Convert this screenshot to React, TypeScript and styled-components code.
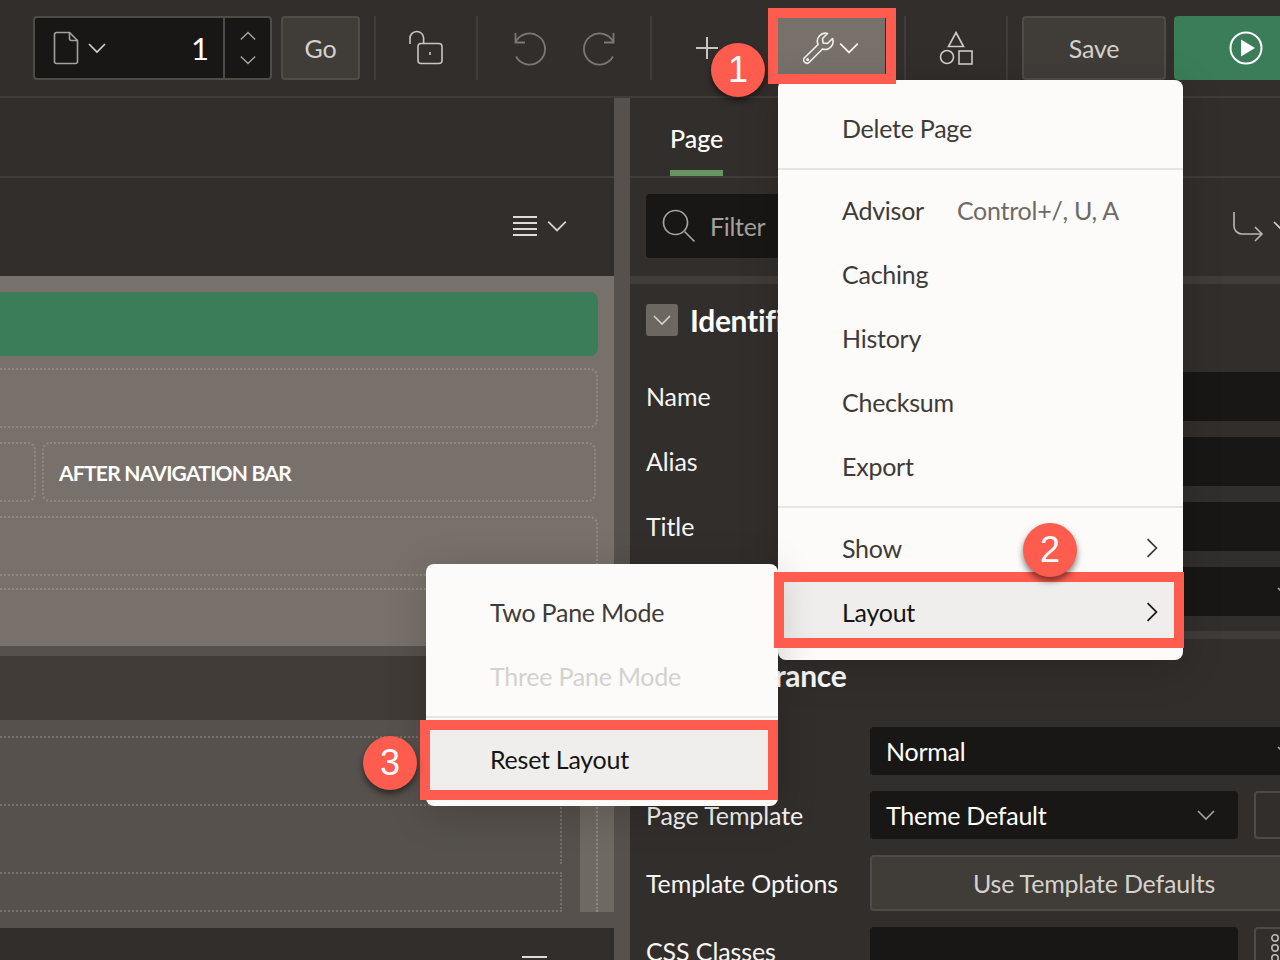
import styled, { createGlobalStyle } from 'styled-components'
import { ReactNode } from 'react'

const GlobalStyle = createGlobalStyle`
  html, body { margin: 0; padding: 0; background: #322e2b; overflow: hidden; }
  * { box-sizing: border-box; }
`

const FONT = `Lato, "Noto Sans", "Liberation Sans", sans-serif`

function Chevron({ dir = 'down', size = 20, color = '#d6d3cf' }: { dir?: 'down' | 'up' | 'right'; size?: number; color?: string }) {
  const d = dir === 'down' ? 'M2 6l8 8 8-8' : dir === 'up' ? 'M2 14l8-8 8 8' : 'M6 2l8 8-8 8'
  return (
    <svg width={size} height={size} viewBox="0 0 20 20" fill="none" stroke={color} strokeWidth={1.6}>
      <path d={d} />
    </svg>
  )
}

function PageIcon() {
  return (
    <svg width="26" height="34" viewBox="0 0 26 34" fill="none" stroke="#a5a19c" strokeWidth={1.6}>
      <path d="M1.5 3.5a2 2 0 0 1 2-2h13l8 8v21a2 2 0 0 1-2 2h-19a2 2 0 0 1-2-2z" />
      <path d="M16.5 1.5v6a2 2 0 0 0 2 2h6" />
    </svg>
  )
}

function LockIcon() {
  return (
    <svg width="34" height="36" viewBox="0 0 34 36" fill="none" stroke="#c8c5c1" strokeWidth={1.6}>
      <path d="M1 14V8.5a6.8 6.8 0 0 1 13.6-.5v5" />
      <rect x="9" y="13.5" width="24" height="20" rx="3" />
      <path d="M21 22v3" />
    </svg>
  )
}

function UndoIcon({ flip }: { flip?: boolean }) {
  return (
    <svg width="34" height="36" viewBox="0 0 34 36" fill="none" stroke="#7d7873" strokeWidth={1.8} style={flip ? { transform: 'scaleX(-1)' } : undefined}>
      <path d="M3.5 3v9.5H13" />
      <path d="M3.5 12.5A15.5 15.5 0 1 1 4 26.5" />
    </svg>
  )
}

function WrenchIcon() {
  return (
    <svg width="33" height="33" viewBox="0 0 33 33" fill="none" stroke="#f2f0ed" strokeWidth={1.6} strokeLinejoin="round">
      <path d="M24.5 1.5l-5 5 .5 4.5 4.5.5 5-5a8 8 0 0 1-10 10.5L6.5 30a3.2 3.2 0 0 1-5-4.2l13.6-13.3A8 8 0 0 1 24.5 1.5z" />
      <circle cx="4.6" cy="27.6" r="0.8" />
    </svg>
  )
}

function ShapesIcon() {
  return (
    <svg width="35" height="34" viewBox="0 0 35 34" fill="none" stroke="#cfccc8" strokeWidth={1.6}>
      <path d="M17 1.5L24.5 15.5h-15z" />
      <circle cx="8" cy="26" r="6.5" />
      <rect x="20" y="20" width="13" height="13" />
    </svg>
  )
}

function PlayIcon() {
  return (
    <svg width="34" height="34" viewBox="0 0 34 34" fill="none">
      <circle cx="17" cy="17" r="15.5" stroke="#fff" strokeWidth={2} />
      <path d="M12 8.5L26 17l-14 8.5z" fill="#fff" />
    </svg>
  )
}

function SearchIcon() {
  return (
    <svg width="34" height="34" viewBox="0 0 34 34" fill="none" stroke="#a5a19c" strokeWidth={1.7}>
      <circle cx="13.5" cy="13.5" r="12" />
      <path d="M22.5 22.5l10 10" />
    </svg>
  )
}

function ReturnIcon() {
  return (
    <svg width="32" height="32" viewBox="0 0 32 32" fill="none" stroke="#bcb8b4" strokeWidth={1.6}>
      <path d="M2 2v14a8 8 0 0 0 8 8h20" />
      <path d="M23 17l7 7-7 7" />
    </svg>
  )
}

function HamburgerIcon() {
  return (
    <svg width="26" height="22" viewBox="0 0 26 22" fill="none" stroke="#dedbd8" strokeWidth={1.8}>
      <path d="M1 2h24M1 8h24M1 14h24M1 20h24" />
    </svg>
  )
}

function DotsIcon() {
  return (
    <svg width="10" height="40" viewBox="0 0 10 40" fill="none" stroke="#bcb8b4" strokeWidth={1.6}>
      <circle cx="5" cy="5" r="3.2" />
      <circle cx="5" cy="15" r="3.2" />
      <circle cx="5" cy="25" r="3.2" />
    </svg>
  )
}

const Frame = styled.div`
  position: relative;
  width: 1280px;
  height: 960px;
  overflow: hidden;
  background: #322e2b;
  font-family: ${FONT};
`

/* top toolbar */

const Toolbar = styled.div`
  display: flex;
  align-items: stretch;
  height: 98px;
  padding: 16px 0 16px 33px;
  border-bottom: 2px solid #403c38;
`

const PageBox = styled.div`
  display: flex;
  width: 239px;
  height: 64px;
  background: #181715;
  border: 2px solid #4f4b47;
  border-radius: 4px;
`

const PageInput = styled.div`
  flex: 1;
  display: flex;
  align-items: center;
  padding: 0 14px 0 18px;
  gap: 8px;
`

const PageNumber = styled.span`
  margin-left: auto;
  color: #fff;
  font-size: 31px;
`

const Stepper = styled.div`
  width: 47px;
  display: flex;
  flex-direction: column;
  align-items: center;
  justify-content: space-between;
  padding: 9px 0 9px;
  border-left: 2px solid #4f4b47;
`

const Button = styled.div<{ $width: number; $left?: number }>`
  display: flex;
  align-items: center;
  justify-content: center;
  width: ${({ $width }) => $width}px;
  margin-left: ${({ $left }) => $left ?? 0}px;
  height: 64px;
  background: #403c38;
  border: 2px solid #4f4b47;
  border-radius: 4px;
  color: #d5d2ce;
  font-size: 25px;
  letter-spacing: -0.2px;
`

const Divider = styled.div<{ $left?: number }>`
  width: 2px;
  height: 64px;
  margin-left: ${({ $left }) => $left ?? 0}px;
  background: #403c38;
`

const IconSlot = styled.div<{ $width: number; $pad?: number; $gap?: number }>`
  display: flex;
  align-items: center;
  justify-content: ${({ $pad }) => ($pad !== undefined ? 'flex-start' : 'center')};
  width: ${({ $width }) => $width}px;
  padding-left: ${({ $pad }) => $pad ?? 0}px;
  gap: ${({ $gap }) => $gap ?? 0}px;
`

const PlusGlyph = styled.div`
  position: relative;
  width: 22px;
  height: 22px;
  &::before, &::after {
    content: '';
    position: absolute;
    background: #c8c5c1;
  }
  &::before { left: 10px; top: 0; width: 2px; height: 22px; }
  &::after { left: 0; top: 10px; width: 22px; height: 2px; }
`

const WrenchButton = styled.div`
  display: flex;
  align-items: center;
  gap: 2px;
  width: 108px;
  padding-left: 26px;
  background: #78716b;
`

const RunButton = styled.div`
  flex: 1;
  margin-left: 8px;
  display: flex;
  align-items: center;
  padding-left: 55px;
  background: #3a7d58;
  border-radius: 4px 0 0 4px;
`

/* panes */

const Workspace = styled.div`
  display: flex;
  height: 862px;
`

const LeftPane = styled.div`
  width: 614px;
  display: flex;
  flex-direction: column;
`

const Splitter = styled.div`
  width: 16px;
  background: #56514c;
`

const RightPane = styled.div`
  flex: 1;
  overflow: hidden;
`

const BlankBar = styled.div`
  height: 80px;
  border-bottom: 2px solid #403c38;
`

const LeftTools = styled.div`
  display: flex;
  align-items: center;
  justify-content: flex-end;
  gap: 8px;
  height: 98px;
  padding: 0 46px 2px 0;
`

const GridTop = styled.div`
  height: 370px;
  padding: 16px 16px 0 0;
  background: #78716b;
  overflow: hidden;
`

const GreenBar = styled.div`
  height: 64px;
  background: #3a7d58;
  border-radius: 0 8px 8px 0;
`

const DottedBox = styled.div<{ $height?: number; $top?: number }>`
  height: ${({ $height }) => $height ?? 60}px;
  margin-top: ${({ $top }) => $top ?? 12}px;
  border: 2px dotted #8f8982;
  border-left: none;
  border-radius: 0 8px 8px 0;
`

const SlotRow = styled.div`
  display: flex;
  gap: 6px;
  height: 60px;
  margin-top: 14px;
  padding-right: 2px;
`

const SlotStub = styled.div`
  width: 36px;
  border: 2px dotted #8f8982;
  border-left: none;
  border-radius: 0 8px 8px 0;
`

const SlotCell = styled.div`
  flex: 1;
  display: flex;
  align-items: center;
  padding-left: 15px;
  border: 2px dotted #8f8982;
  border-radius: 8px;
  color: #fff;
  font-size: 21px;
  font-weight: 700;
  letter-spacing: -0.75px;
`

const GridGap = styled.div`
  height: 10px;
  background: #56514c;
`

const GridHeader = styled.div`
  height: 64px;
  background: #403b37;
`

const GridBottom = styled.div`
  display: flex;
  height: 208px;
  background: #56514c;
`

const GridBottomRows = styled.div`
  width: 562px;
  padding-top: 16px;
`

const LowerBox = styled.div<{ $height: number; $top?: number }>`
  height: ${({ $height }) => $height}px;
  margin-top: ${({ $top }) => $top ?? 0}px;
  border: 2px dotted #77716b;
  border-left: none;
  border-bottom: ${({ $height }) => ($height > 38 && $height < 60 ? '2px dotted #77716b' : 'none')};
`

const ScrollStrip = styled.div`
  width: 34px;
  height: 192px;
  margin-left: 18px;
  background: #6f6963;
  position: relative;
  &::after {
    content: '';
    position: absolute;
    left: 16px;
    top: 0;
    bottom: 0;
    border-left: 2px dotted #8f8982;
  }
`

const LeftFooter = styled.div`
  flex: 1;
  position: relative;
`

const FooterMark = styled.div`
  position: absolute;
  left: 522px;
  top: 28px;
  width: 25px;
  height: 2px;
  background: #dedbd8;
`

/* property pane */

const TabBar = styled.div`
  height: 80px;
  padding-left: 40px;
  border-bottom: 2px solid #403c38;
`

const Tab = styled.div`
  display: inline-flex;
  align-items: center;
  height: 78px;
  padding-top: 8px;
  border-bottom: 6px solid #6a9463;
  color: #fff;
  font-size: 25px;
  font-weight: 500;
`

const FilterRow = styled.div`
  display: flex;
  align-items: center;
  height: 98px;
  padding: 0 0 2px 16px;
  gap: 122px;
`

const FilterBox = styled.div`
  display: flex;
  align-items: center;
  flex: 0 0 464px;
  height: 64px;
  padding-left: 16px;
  gap: 14px;
  background: #181715;
  border-radius: 4px;
  color: #a5a19c;
  font-size: 25px;
  letter-spacing: -0.3px;
`

const ReturnTool = styled.div`
  display: flex;
  align-items: center;
  gap: 8px;
`

const Band = styled.div`
  height: 8px;
  background: #403c38;
`

const SectionHead = styled.div<{ $height: number }>`
  display: flex;
  align-items: flex-start;
  gap: 12px;
  height: ${({ $height }) => $height}px;
  padding: 20px 0 0 16px;
  color: #fff;
  font-size: 30px;
  font-weight: 700;
  line-height: 32px;
  letter-spacing: -0.3px;
`

const Toggle = styled.div`
  display: flex;
  align-items: center;
  justify-content: center;
  width: 32px;
  height: 32px;
  background: #6c6761;
  border-radius: 3px;
`

const FieldRow = styled.div<{ $height?: number; $after?: number }>`
  display: flex;
  align-items: center;
  height: ${({ $height }) => $height ?? 48}px;
  margin-bottom: ${({ $after }) => $after ?? 16}px;
  padding-left: 16px;
`

const Label = styled.div`
  flex: 0 0 224px;
  padding-bottom: 1px;
  color: #f7f6f4;
  font-size: 25px;
  letter-spacing: -0.1px;
  white-space: nowrap;
`

const Field = styled.div<{ $width?: number }>`
  flex: 0 0 ${({ $width }) => $width ?? 448}px;
  display: flex;
  align-items: center;
  justify-content: space-between;
  align-self: stretch;
  padding: 0 22px 0 16px;
  background: #181715;
  border-radius: 4px;
  color: #fff;
  font-size: 25px;
  letter-spacing: -0.25px;
`

const SideButton = styled.div`
  flex: 0 0 64px;
  align-self: stretch;
  margin-left: 16px;
  padding: 4px 0 0 14px;
  background: #322e2b;
  border: 2px solid #4f4b47;
  border-radius: 4px;
`

const WideButton = styled(Button)`
  flex: 0 0 448px;
  height: 100%;
`

/* menus and callouts */

const Menu = styled.div`
  position: absolute;
  left: 778px;
  top: 80px;
  width: 405px;
  height: 580px;
  padding-top: 17px;
  background: #fcfbf9;
  border-radius: 8px;
  box-shadow: 0 8px 40px rgba(0, 0, 0, 0.18);
`

const SubMenu = styled(Menu)`
  left: 426px;
  top: 564px;
  width: 352px;
  height: 242px;
`

const MenuItem = styled.div<{ $active?: boolean; $disabled?: boolean }>`
  display: flex;
  align-items: center;
  height: 64px;
  padding: 0 20px 2px 64px;
  background: ${({ $active }) => ($active ? '#efeeec' : 'transparent')};
  color: ${({ $active, $disabled }) => ($disabled ? '#d3d1ce' : $active ? '#161513' : '#3e3a37')};
  font-size: 25px;
  letter-spacing: -0.25px;
`

const Shortcut = styled.span`
  margin-left: 33px;
  color: #6f6a65;
`

const SubArrow = styled.span`
  display: flex;
  margin-left: auto;
`

const MenuRule = styled.div<{ $before: number; $after: number }>`
  height: 2px;
  margin: ${({ $before, $after }) => `${$before}px 0 ${$after}px`};
  background: #e6e4e1;
`

const Highlight = styled.div`
  position: absolute;
  border: 10px solid #fd5c4e;
`

const WrenchHighlight = styled(Highlight)`
  left: 768px;
  top: 8px;
  width: 128px;
  height: 76px;
`

const LayoutHighlight = styled(Highlight)`
  left: 774px;
  top: 572px;
  width: 410px;
  height: 76px;
`

const ResetHighlight = styled(Highlight)`
  left: 420px;
  top: 720px;
  width: 358px;
  height: 80px;
`

const Badge = styled.div<{ $x: number; $y: number }>`
  position: absolute;
  left: ${({ $x }) => $x - 27}px;
  top: ${({ $y }) => $y - 27}px;
  display: flex;
  align-items: center;
  justify-content: center;
  width: 54px;
  height: 54px;
  border-radius: 50%;
  background: #fd5c4e;
  box-shadow: 0 4px 6px rgba(0, 0, 0, 0.5);
  color: #fff;
  font-family: "Liberation Sans", Arial, sans-serif;
  font-size: 36px;
`

function SelectField({ children, width }: { children?: ReactNode; width?: number }) {
  return (
    <Field $width={width}>
      <span>{children}</span>
      <Chevron color="#a5a19c" />
    </Field>
  )
}

export default function App() {
  return (
    <Frame>
      <GlobalStyle />
      <Toolbar>
        <PageBox>
          <PageInput>
            <PageIcon />
            <Chevron />
            <PageNumber>1</PageNumber>
          </PageInput>
          <Stepper>
            <Chevron dir="up" size={18} color="#a5a19c" />
            <Chevron size={18} color="#a5a19c" />
          </Stepper>
        </PageBox>
        <Button $width={79} $left={9}>Go</Button>
        <Divider $left={14} />
        <IconSlot $width={100} $pad={33}><LockIcon /></IconSlot>
        <Divider />
        <IconSlot $width={172} $pad={34} $gap={37}>
          <UndoIcon />
          <UndoIcon flip />
        </IconSlot>
        <Divider />
        <IconSlot $width={125} $pad={44}><PlusGlyph /></IconSlot>
        <WrenchButton>
          <WrenchIcon />
          <Chevron size={22} color="#f2f0ed" />
        </WrenchButton>
        <Divider $left={19} />
        <IconSlot $width={100}><ShapesIcon /></IconSlot>
        <Divider />
        <Button $width={144} $left={14}>Save</Button>
        <RunButton><PlayIcon /></RunButton>
      </Toolbar>

      <Workspace>
        <LeftPane>
          <BlankBar />
          <LeftTools>
            <HamburgerIcon />
            <Chevron size={22} />
          </LeftTools>
          <GridTop>
            <GreenBar />
            <DottedBox />
            <SlotRow>
              <SlotStub />
              <SlotCell>AFTER NAVIGATION BAR</SlotCell>
            </SlotRow>
            <DottedBox $top={14} />
            <DottedBox $height={60} $top={12} />
          </GridTop>
          <GridGap />
          <GridHeader />
          <GridBottom>
            <GridBottomRows>
              <LowerBox $height={60} />
              <LowerBox $height={60} $top={8} />
              <LowerBox $height={40} $top={8} />
            </GridBottomRows>
            <ScrollStrip />
          </GridBottom>
          <LeftFooter><FooterMark /></LeftFooter>
        </LeftPane>
        <Splitter />
        <RightPane>
          <TabBar><Tab>Page</Tab></TabBar>
          <FilterRow>
            <FilterBox>
              <SearchIcon />
              Filter
            </FilterBox>
            <ReturnTool>
              <ReturnIcon />
              <Chevron />
            </ReturnTool>
          </FilterRow>
          <Band />
          <SectionHead $height={88}>
            <Toggle><Chevron color="#d6d3cf" /></Toggle>
            Identification
          </SectionHead>
          <FieldRow $height={49}><Label>Name</Label><Field /></FieldRow>
          <FieldRow $height={49}><Label>Alias</Label><Field /></FieldRow>
          <FieldRow $height={49}><Label>Title</Label><Field /></FieldRow>
          <FieldRow $height={49} $after={15}><Label>Page Group</Label><SelectField /></FieldRow>
          <Band />
          <SectionHead $height={88}>
            <Toggle><Chevron color="#d6d3cf" /></Toggle>
            Appearance
          </SectionHead>
          <FieldRow><Label>Page Mode</Label><SelectField>Normal</SelectField></FieldRow>
          <FieldRow>
            <Label>Page Template</Label>
            <SelectField width={368}>Theme Default</SelectField>
            <SideButton />
          </FieldRow>
          <FieldRow $height={56}>
            <Label>Template Options</Label>
            <WideButton $width={448}>Use Template Defaults</WideButton>
          </FieldRow>
          <FieldRow>
            <Label>CSS Classes</Label>
            <Field $width={368} />
            <SideButton><DotsIcon /></SideButton>
          </FieldRow>
        </RightPane>
      </Workspace>

      <Menu>
        <MenuItem>Delete Page</MenuItem>
        <MenuRule $before={7} $after={9} />
        <MenuItem>Advisor<Shortcut>Control+/, U, A</Shortcut></MenuItem>
        <MenuItem>Caching</MenuItem>
        <MenuItem>History</MenuItem>
        <MenuItem>Checksum</MenuItem>
        <MenuItem>Export</MenuItem>
        <MenuRule $before={7} $after={9} />
        <MenuItem>Show<SubArrow><Chevron dir="right" size={22} color="#3e3a37" /></SubArrow></MenuItem>
        <MenuItem $active>Layout<SubArrow><Chevron dir="right" size={22} color="#161513" /></SubArrow></MenuItem>
      </Menu>

      <SubMenu>
        <MenuItem>Two Pane Mode</MenuItem>
        <MenuItem $disabled>Three Pane Mode</MenuItem>
        <MenuRule $before={7} $after={10} />
        <MenuItem $active>Reset Layout</MenuItem>
      </SubMenu>

      <WrenchHighlight />
      <LayoutHighlight />
      <ResetHighlight />
      <Badge $x={738} $y={70}>1</Badge>
      <Badge $x={1050} $y={550}>2</Badge>
      <Badge $x={390} $y={763}>3</Badge>
    </Frame>
  )
}
